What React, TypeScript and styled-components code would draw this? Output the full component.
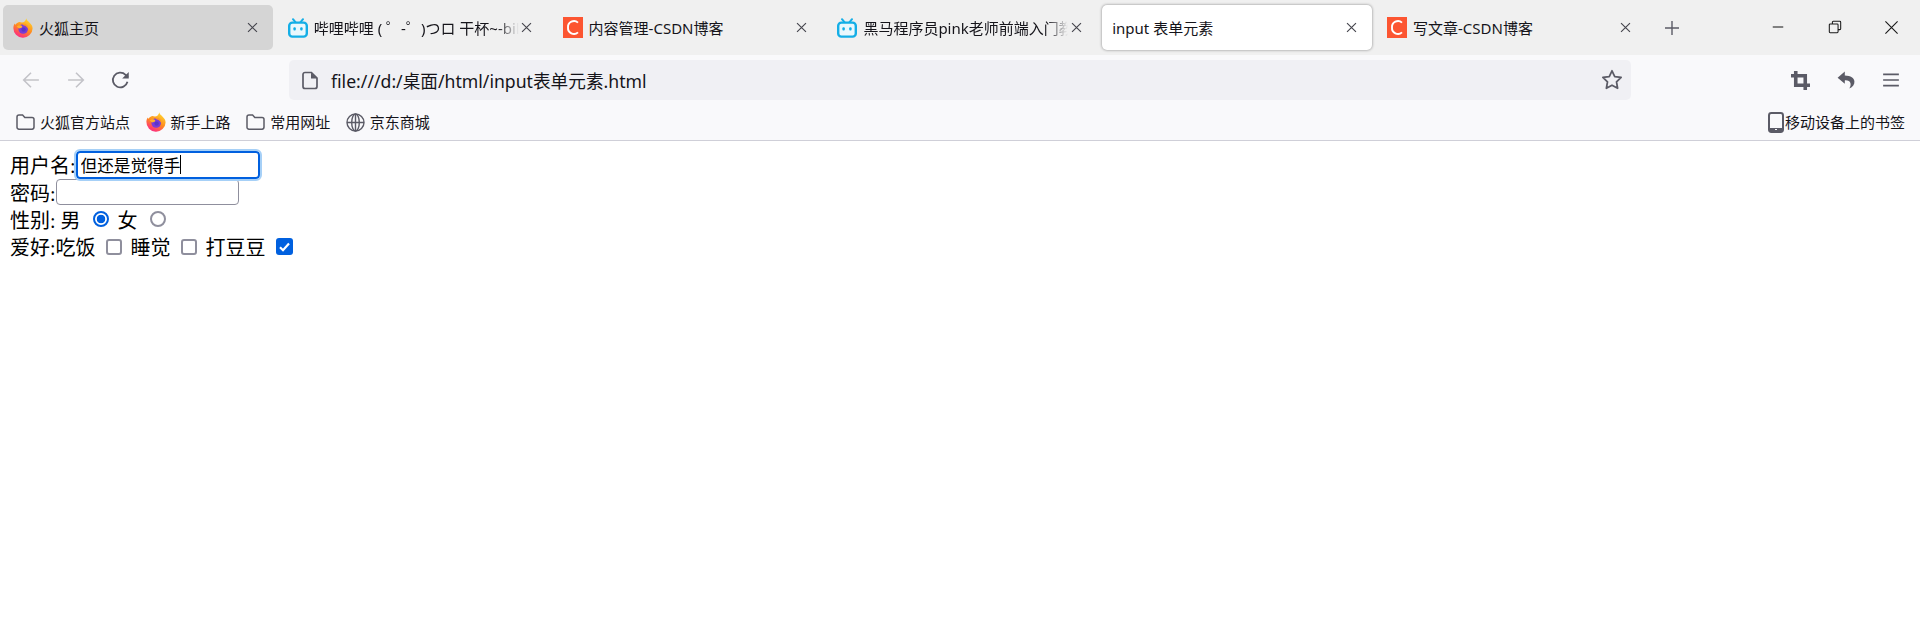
import React from 'react';
import styled, { createGlobalStyle } from 'styled-components';

const GlobalStyle = createGlobalStyle`
  html, body {
    margin: 0;
    padding: 0;
    background: #ffffff;
  }
  body {
    font-family: "Noto Sans", "Noto Sans CJK SC", sans-serif;
    color: #15141a;
  }
`;

const Window = styled.div`
  width: 1920px;
  height: 628px;
  overflow: hidden;
  display: flex;
  flex-direction: column;
  background: #ffffff;
`;

const TabStrip = styled.div`
  height: 55px;
  flex: none;
  display: flex;
  align-items: flex-start;
  gap: 4.8px;
  padding: 5px 0 0 3px;
  box-sizing: border-box;
  background: #f0f0f0;
`;

const Tab = styled.div<{ $state?: 'hover' | 'active' }>`
  width: 270px;
  height: 45px;
  flex: none;
  display: flex;
  align-items: center;
  gap: 6px;
  padding: 0 11px 0 10px;
  box-sizing: border-box;
  border-radius: 5px;
  font-size: 15px;
  color: #15141a;
  background: ${(p) =>
    p.$state === 'active' ? '#ffffff' : p.$state === 'hover' ? '#d5d5d5' : 'transparent'};
  box-shadow: ${(p) => (p.$state === 'active' ? '0 0 3px rgba(0, 0, 0, 0.45)' : 'none')};
`;

const TabTitle = styled.span<{ $fade?: boolean }>`
  flex: 1;
  min-width: 0;
  white-space: pre;
  overflow: hidden;
  line-height: 20px;
  ${(p) =>
    p.$fade
      ? `margin-right: -8px;
         -webkit-mask-image: linear-gradient(90deg, #000 calc(100% - 22px), transparent);
         mask-image: linear-gradient(90deg, #000 calc(100% - 22px), transparent);`
      : ''}
`;

const CloseButton = styled.span`
  flex: none;
  width: 20px;
  height: 20px;
  display: flex;
  align-items: center;
  justify-content: center;
  color: #45454d;
`;

const NewTab = styled.span`
  flex: none;
  width: 20px;
  height: 45px;
  margin-left: 10px;
  display: flex;
  align-items: center;
  justify-content: center;
  color: #5b5b66;
`;

const WindowControls = styled.div`
  margin-left: auto;
  height: 45px;
  margin-top: -5px;
  display: flex;
`;

const WindowButton = styled.span`
  width: 57px;
  height: 54px;
  display: flex;
  align-items: center;
  justify-content: center;
  color: #1a1a1a;
`;

const Toolbar = styled.div`
  height: 50px;
  flex: none;
  display: flex;
  align-items: flex-start;
  padding: 5px 7px 0 8px;
  box-sizing: border-box;
  background: #f9f9fb;
`;

const ToolButton = styled.span<{ $dim?: boolean }>`
  width: 45px;
  height: 40px;
  flex: none;
  display: flex;
  align-items: center;
  justify-content: center;
  color: ${(p) => (p.$dim ? '#c3c3c8' : '#5b5b66')};
`;

const AddressBar = styled.div`
  width: 1342px;
  height: 40px;
  flex: none;
  margin: 0 auto 0 146px;
  display: flex;
  align-items: center;
  box-sizing: border-box;
  padding: 0 8px 0 13px;
  border-radius: 5px;
  background: #f0f0f4;
  color: #5b5b66;
`;

const UrlText = styled.span`
  flex: 1;
  margin-left: 13px;
  font-size: 17.65px;
  color: #15141a;
  white-space: nowrap;
`;

const BookmarkBar = styled.div`
  height: 36px;
  flex: none;
  display: flex;
  align-items: center;
  gap: 15.6px;
  padding: 0 15px 1px 16px;
  box-sizing: border-box;
  background: #f9f9fb;
  border-bottom: 1px solid #cfcfd8;
`;

const Bookmark = styled.span<{ $end?: boolean }>`
  display: flex;
  align-items: center;
  gap: ${(p) => (p.$end ? '1px' : '5px')};
  font-size: 15px;
  line-height: 20px;
  white-space: nowrap;
  margin-left: ${(p) => (p.$end ? 'auto' : '0')};
  color: #15141a;
  svg {
    color: #5b5b66;
  }
`;

const Page = styled.form`
  flex: 1;
  padding: 9px 10px 10px;
  background: #ffffff;
  font-family: "Liberation Serif", "Noto Sans CJK SC", serif;
  font-size: 20px;
  color: #000000;
`;

const FormRow = styled.div<{ $height: number }>`
  height: ${(p) => p.$height}px;
  display: flex;
  align-items: center;
  white-space: pre;
`;

const FieldWrap = styled.span`
  position: relative;
  display: inline-flex;
`;

const TextField = styled.input<{ $focused?: boolean }>`
  appearance: none;
  width: ${(p) => (p.$focused ? '184px' : '183px')};
  height: ${(p) => (p.$focused ? '28px' : '26px')};
  margin: 0;
  padding: 0 3px;
  box-sizing: border-box;
  border: ${(p) => (p.$focused ? '2px solid #0060df' : '1px solid #8f8f9d')};
  border-radius: 4px;
  outline: ${(p) => (p.$focused ? '2px solid #a6d0f7' : 'none')};
  font-family: "Noto Sans CJK SC", sans-serif;
  font-size: 16.67px;
  color: #000000;
  background: #ffffff;
`;

const Caret = styled.span`
  position: absolute;
  left: 104px;
  top: 4px;
  width: 1px;
  height: 19px;
  background: #000000;
`;

const Radio = styled.input`
  appearance: none;
  width: 16px;
  height: 16px;
  flex: none;
  margin: 0 9px 0 12px;
  box-sizing: border-box;
  border: 2px solid #8f8f9d;
  border-radius: 50%;
  background: #ffffff;
  &:checked {
    border-color: #0060df;
    background: radial-gradient(circle, #0060df 0 4px, #ffffff 4.6px);
  }
`;

const Checkbox = styled.input`
  appearance: none;
  width: 16px;
  height: 16px;
  flex: none;
  margin: 0 9px 0 10px;
  box-sizing: border-box;
  border: 2px solid #8f8f9d;
  border-radius: 3px;
  background: #ffffff;
`;

const CheckedBox = styled.span`
  width: 17px;
  height: 17px;
  flex: none;
  margin-left: 10px;
  display: flex;
  align-items: center;
  justify-content: center;
  border-radius: 3px;
  background: #0060df;
`;

const Line = ({ d, size = 14, width = 1.3 }: { d: string; size?: number; width?: number }) => (
  <svg width={size} height={size} viewBox="0 0 16 16" fill="none" stroke="currentColor" strokeWidth={width}>
    <path d={d} />
  </svg>
);

const CloseIcon = () => <Line d="M2.5 2.5 13.5 13.5M13.5 2.5 2.5 13.5" size={13} width={1.4} />;

const FirefoxIcon = ({ id }: { id: string }) => (
  <svg width="20" height="20" viewBox="0 0 20 20" style={{ flex: 'none' }}>
    <defs>
      <linearGradient id={id} x1="0.75" y1="0.05" x2="0.25" y2="1">
        <stop offset="0" stopColor="#ffd52e" />
        <stop offset="0.5" stopColor="#ff8a1f" />
        <stop offset="0.85" stopColor="#ff3d6e" />
        <stop offset="1" stopColor="#f5318a" />
      </linearGradient>
    </defs>
    <path
      d="M13.4 0.2c0 1.8 1.4 2.6 3 4.2 2 2 3.2 3.6 3.2 6a9.6 9.6 0 1 1-19.2-0.6c0-1.6 0.5-3.2 1.4-4.4 0.1 0.7 0.4 1.1 0.8 1.4 0.5-1.3 1.6-2.2 3-2.6 1.2-0.3 2.2 0.2 3.4 0.2 2 0 3.6-1.4 4.4-4.2z"
      fill={`url(#${id})`}
    />
    <circle cx="10.2" cy="11" r="4.8" fill="#7a3bd6" />
    <path d="M3.6 8.4c1.6-1 3-1.4 4.4-1 1.2 0.3 1.6 1 1 1.8-0.5 0.6-1.8 0.8-3 1.4z" fill="#ffb02b" />
    <path d="M9 6c2.4-0.6 5 0.4 6 2.8 0.3 0.8 0.3 1.6 0.2 2.2-0.8-2-2.4-3.4-4.4-3.6z" fill="#ff9a24" />
    <circle cx="10.6" cy="11.6" r="2.2" fill="#5a35c9" />
  </svg>
);

const BilibiliIcon = () => (
  <svg width="20" height="20" viewBox="0 0 20 20" style={{ flex: 'none' }}>
    <path d="M5 1.2 7.6 4.4M15 1.2 12.4 4.4" stroke="#14aee6" strokeWidth="2" strokeLinecap="round" fill="none" />
    <rect x="1.2" y="4.6" width="17.6" height="14" rx="3.2" fill="#eaf8fd" stroke="#14aee6" strokeWidth="2.4" />
    <rect x="5.4" y="9.2" width="2.4" height="3.2" rx="1" fill="#14aee6" />
    <rect x="12.2" y="9.2" width="2.4" height="3.2" rx="1" fill="#14aee6" />
  </svg>
);

const CsdnIcon = () => (
  <svg width="20" height="21" viewBox="0 0 20 21" style={{ flex: 'none' }}>
    <rect width="20" height="21" fill="#fc5531" />
    <path d="M15 5.6A6 6 0 0 0 5 10.5a6 6 0 0 0 10 4.9" fill="none" stroke="#ffffff" strokeWidth="1.9" />
  </svg>
);

const FolderIcon = () => (
  <svg width="19" height="18" viewBox="0 0 19 18" fill="none" stroke="currentColor" strokeWidth="1.5">
    <path d="M1 4a2 2 0 0 1 2-2h3.6l2.2 2.4H16a2 2 0 0 1 2 2V14a2.2 2.2 0 0 1-2 2.2H3A2 2 0 0 1 1 14z" />
  </svg>
);

const GlobeIcon = () => (
  <svg width="19" height="19" viewBox="0 0 19 19" fill="none" stroke="currentColor" strokeWidth="1.4">
    <circle cx="9.5" cy="9.5" r="8.5" />
    <ellipse cx="9.5" cy="9.5" rx="3.8" ry="8.5" />
    <path d="M1 9.5h17M9.5 1v17" />
  </svg>
);

const PhoneIcon = () => (
  <svg width="16" height="21" viewBox="0 0 16 21">
    <rect x="1" y="1" width="14" height="19" rx="2.4" fill="none" stroke="currentColor" strokeWidth="2" />
    <rect x="2" y="16" width="12" height="3" fill="currentColor" />
    <rect x="7" y="17" width="2" height="1" fill="#f9f9fb" />
  </svg>
);

const App = () => (
  <>
    <GlobalStyle />
    <Window>
      <TabStrip>
        <Tab $state="hover">
          <FirefoxIcon id="ff-tab" />
          <TabTitle>火狐主页</TabTitle>
          <CloseButton><CloseIcon /></CloseButton>
        </Tab>
        <Tab>
          <BilibiliIcon />
          <TabTitle $fade>哔哩哔哩 ( ゜-゜)つロ 干杯~-bilibili</TabTitle>
          <CloseButton><CloseIcon /></CloseButton>
        </Tab>
        <Tab>
          <CsdnIcon />
          <TabTitle>内容管理-CSDN博客</TabTitle>
          <CloseButton><CloseIcon /></CloseButton>
        </Tab>
        <Tab>
          <BilibiliIcon />
          <TabTitle $fade>黑马程序员pink老师前端入门教程</TabTitle>
          <CloseButton><CloseIcon /></CloseButton>
        </Tab>
        <Tab $state="active">
          <TabTitle>input 表单元素</TabTitle>
          <CloseButton><CloseIcon /></CloseButton>
        </Tab>
        <Tab>
          <CsdnIcon />
          <TabTitle>写文章-CSDN博客</TabTitle>
          <CloseButton><CloseIcon /></CloseButton>
        </Tab>
        <NewTab><Line d="M8 1v14M1 8h14" size={16} width={1.4} /></NewTab>
        <WindowControls>
          <WindowButton><Line d="M2 8h12" size={14} width={1.2} /></WindowButton>
          <WindowButton>
            <Line d="M5 4V2.5A1 1 0 0 1 6 1.5h7.5a1 1 0 0 1 1 1V10a1 1 0 0 1-1 1H12M2.5 4.5h8a1 1 0 0 1 1 1v8a1 1 0 0 1-1 1h-8a1 1 0 0 1-1-1v-8a1 1 0 0 1 1-1z" size={14} width={1.2} />
          </WindowButton>
          <WindowButton><Line d="M1.5 1.5l13 13M14.5 1.5l-13 13" size={15} width={1.2} /></WindowButton>
        </WindowControls>
      </TabStrip>

      <Toolbar>
        <ToolButton $dim><Line d="M15 8H1.5M8 1.5 1.5 8 8 14.5" size={18} width={1.4} /></ToolButton>
        <ToolButton $dim><Line d="M1 8h13.5M8 1.5 14.5 8 8 14.5" size={18} width={1.4} /></ToolButton>
        <ToolButton>
          <svg width="19" height="19" viewBox="0 0 18 18" fill="none" stroke="currentColor" strokeWidth="1.7">
            <path d="M15.6 10.2A7 7 0 1 1 13.8 3.6L16 6" />
            <path d="M16.8 1v6.2h-6.2z" fill="currentColor" stroke="none" />
          </svg>
        </ToolButton>
        <AddressBar>
          <svg width="16" height="19" viewBox="0 0 16 18" fill="none" stroke="currentColor" strokeWidth="1.7" style={{ flex: 'none' }}>
            <path d="M1 3a2 2 0 0 1 2-2h6.4L15 6.6V15a2 2 0 0 1-2 2H3a2 2 0 0 1-2-2z" />
            <path d="M9 1v6h6z" fill="currentColor" stroke="none" />
          </svg>
          <UrlText>file:///d:/桌面/html/input表单元素.html</UrlText>
          <svg width="22" height="22" viewBox="0 0 20 20" fill="none" stroke="currentColor" strokeWidth="1.6" strokeLinejoin="round">
            <path d="M10 1.6l2.5 5.3 5.8.8-4.2 4 1 5.8-5.1-2.8-5.1 2.8 1-5.8-4.2-4 5.8-.8z" />
          </svg>
        </AddressBar>
        <ToolButton>
          <svg width="19" height="19" viewBox="0 0 18 18" fill="none" stroke="currentColor" strokeWidth="3.4">
            <path d="M4.5 0v13.5H18M0 4.5h13.5V18" />
          </svg>
        </ToolButton>
        <ToolButton>
          <svg width="18" height="18" viewBox="0 0 18 18" fill="currentColor">
            <path d="M7.8 0.6 0.6 6.8l7.2 6V9.4c3.2-.2 5 .8 5.6 2.6.5 1.8.1 3.6-1.1 5.4 3.6-1.4 5.4-4 5.1-7.2-.4-3.2-3.4-5.4-9.6-5.6z" />
          </svg>
        </ToolButton>
        <ToolButton><Line d="M1 3h14M1 8h14M1 13h14" size={18} width={1.5} /></ToolButton>
      </Toolbar>

      <BookmarkBar>
        <Bookmark><FolderIcon />火狐官方站点</Bookmark>
        <Bookmark><FirefoxIcon id="ff-bookmark" />新手上路</Bookmark>
        <Bookmark><FolderIcon />常用网址</Bookmark>
        <Bookmark><GlobeIcon />京东商城</Bookmark>
        <Bookmark $end><PhoneIcon />移动设备上的书签</Bookmark>
      </BookmarkBar>

      <Page>
        <FormRow $height={29}>
          用户名:
          <FieldWrap>
            <TextField type="text" $focused readOnly value="但还是觉得手" />
            <Caret />
          </FieldWrap>
        </FormRow>
        <FormRow $height={26}>
          密码:<TextField type="password" readOnly />
        </FormRow>
        <FormRow $height={28}>
          性别: 男<Radio type="radio" name="sex" defaultChecked />女<Radio type="radio" name="sex" />
        </FormRow>
        <FormRow $height={27}>
          爱好:吃饭<Checkbox type="checkbox" />睡觉<Checkbox type="checkbox" />打豆豆
          <CheckedBox>
            <svg width="11" height="10" viewBox="0 0 11 10" fill="none" stroke="#ffffff" strokeWidth="2.2">
              <path d="M1 5.2 4 8.2 10 1.4" />
            </svg>
          </CheckedBox>
        </FormRow>
      </Page>
    </Window>
  </>
);

export default App;
